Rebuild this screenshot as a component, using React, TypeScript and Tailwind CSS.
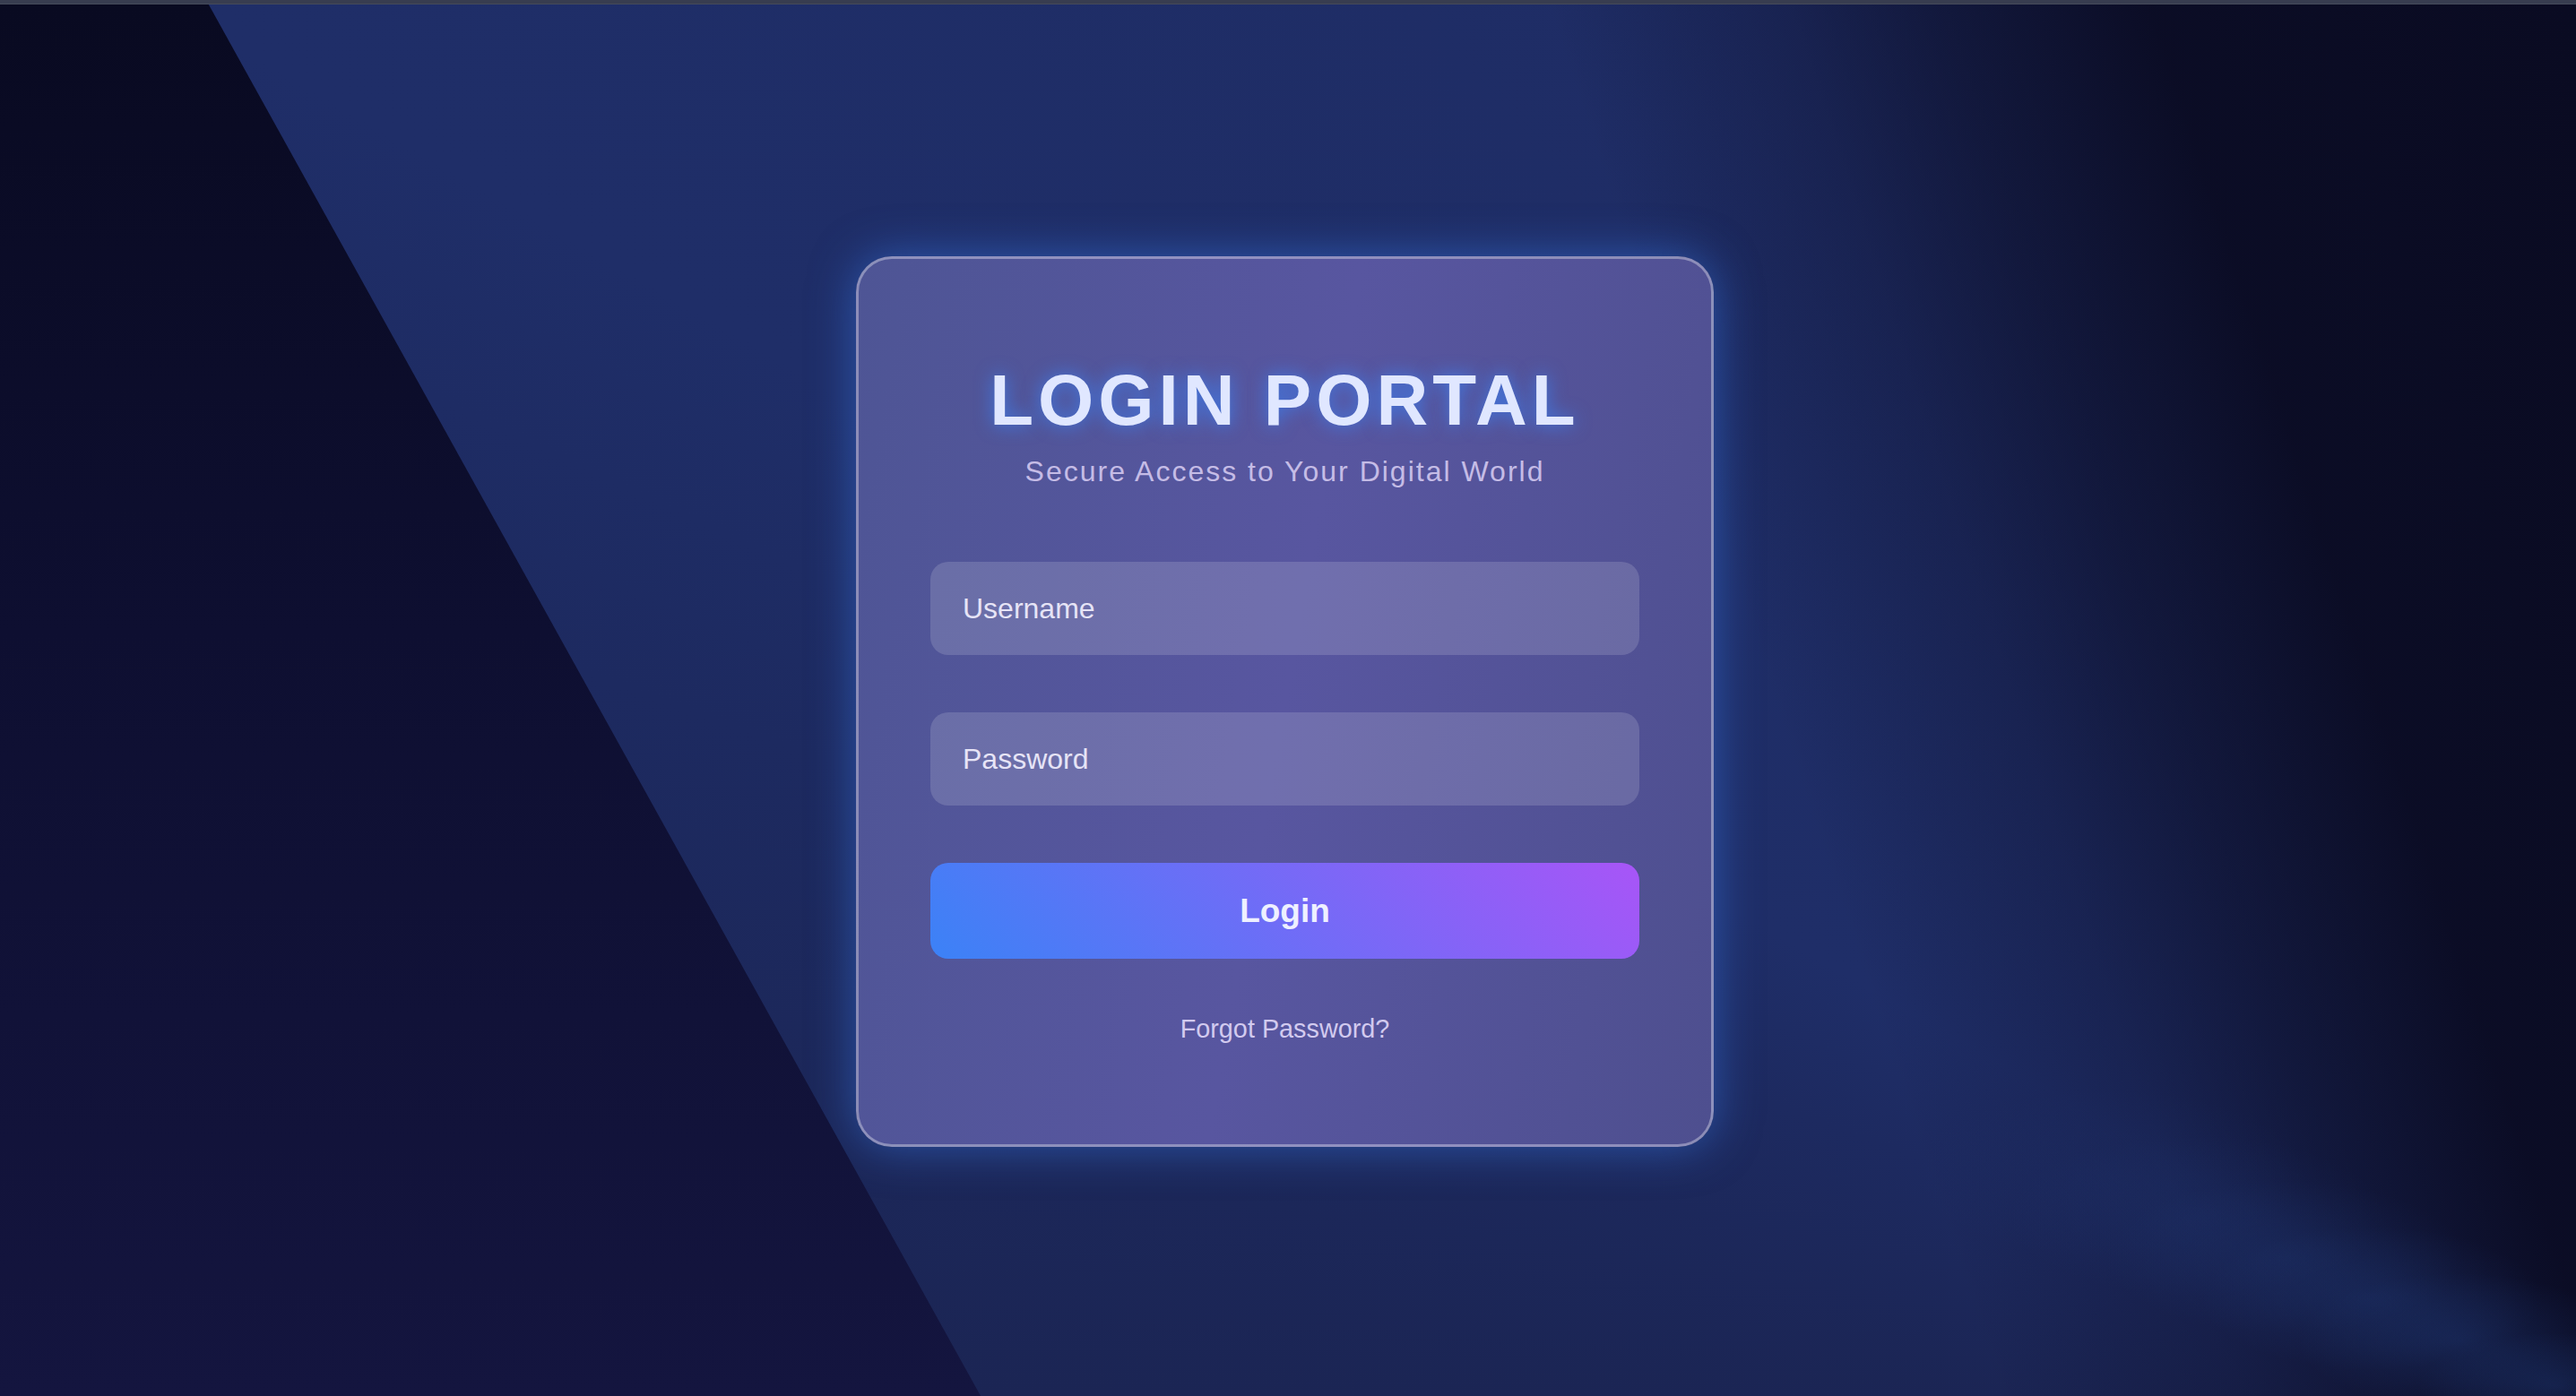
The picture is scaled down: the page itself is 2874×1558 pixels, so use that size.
import { useState } from "react";

const App = () => {
  const [username, setUsername] = useState("");
  const [password, setPassword] = useState("");

  return (
    <div className="min-h-screen flex flex-col bg-[#0b0c26] font-['Liberation_Sans',Arial,sans-serif]">
      {/* window strip at the very top */}
      <div className="h-[5px] bg-[#383d50] border-b border-[#454a5a]" />

      {/* dark left side */}
      <div className="flex-1 flex bg-[linear-gradient(to_bottom,#090a21_0%,#0e0f31_45%,#14153f_100%)]">
        {/* blue side, cut on the diagonal; light streak + right-hand shade + base */}
        <main className="flex-1 flex items-center justify-center [clip-path:polygon(8.1%_0,100%_0,100%_100%,38.07%_100%)] bg-[radial-gradient(ellipse_150px_60px_at_2850px_1542px,rgba(40,75,150,0.3),transparent),radial-gradient(ellipse_180px_75px_at_2744px_1491px,rgba(40,75,150,0.28),transparent),radial-gradient(ellipse_190px_80px_at_2646px_1444px,rgba(40,75,150,0.24),transparent),radial-gradient(ellipse_200px_85px_at_2549px_1398px,rgba(40,75,150,0.18),transparent),radial-gradient(ellipse_210px_90px_at_2451px_1352px,rgba(40,75,150,0.12),transparent),radial-gradient(ellipse_220px_95px_at_2354px_1305px,rgba(40,75,150,0.07),transparent),linear-gradient(72deg,transparent_66%,rgba(10,11,34,0.3)_74%,rgba(10,11,34,0.6)_79%,rgba(10,11,34,0.95)_86%,#0a0b22_100%),conic-gradient(from_270deg_at_100%_100%,#1b2554_0deg,#1d2a60_20deg,#1f2e68_30deg,#1e2b62_90deg)]">
          <div className="mt-[3px] mr-[7px] w-[957px] rounded-[40px] border-[3px] border-white/35 bg-[linear-gradient(100deg,#4e5595_0%,#5856a0_50%,#4e4f8f_100%)] px-[80px] pt-[112px] pb-[112px] shadow-[0_0_50px_rgba(59,130,246,0.5)] flex flex-col items-center">
            <h1 className="text-[80px] leading-[92px] font-bold tracking-[5px] text-[#e0e7ff] [text-shadow:0_0_20px_rgba(59,130,246,0.85)]">
              LOGIN PORTAL
            </h1>
            <p className="mt-[15px] text-[32px] leading-[37px] tracking-[2px] text-[#c5bce6]">
              Secure Access to Your Digital World
            </p>

            <form
              className="mt-[82px] w-full flex flex-col gap-[64px]"
              onSubmit={(e) => e.preventDefault()}
            >
              <input
                type="text"
                value={username}
                onChange={(e) => setUsername(e.target.value)}
                placeholder="Username"
                className="h-[104px] w-full rounded-[20px] bg-white/15 pl-[36px] text-[32px] text-white placeholder:text-[#e6e4f6] outline-none"
              />
              <input
                type="password"
                value={password}
                onChange={(e) => setPassword(e.target.value)}
                placeholder="Password"
                className="h-[104px] w-full rounded-[20px] bg-white/15 pl-[36px] text-[32px] text-white placeholder:text-[#e6e4f6] outline-none"
              />
              <button
                type="submit"
                className="h-[107px] w-full rounded-[20px] bg-[linear-gradient(45deg,#3b82f6,#a855f7)] text-[37px] font-bold text-[#eef0ff]"
              >
                Login
              </button>
            </form>

            <a href="#" className="mt-[62px] text-[28.8px] leading-[33px] text-[#d2caef]">
              Forgot Password?
            </a>
          </div>
        </main>
      </div>
    </div>
  );
};

export default App;
